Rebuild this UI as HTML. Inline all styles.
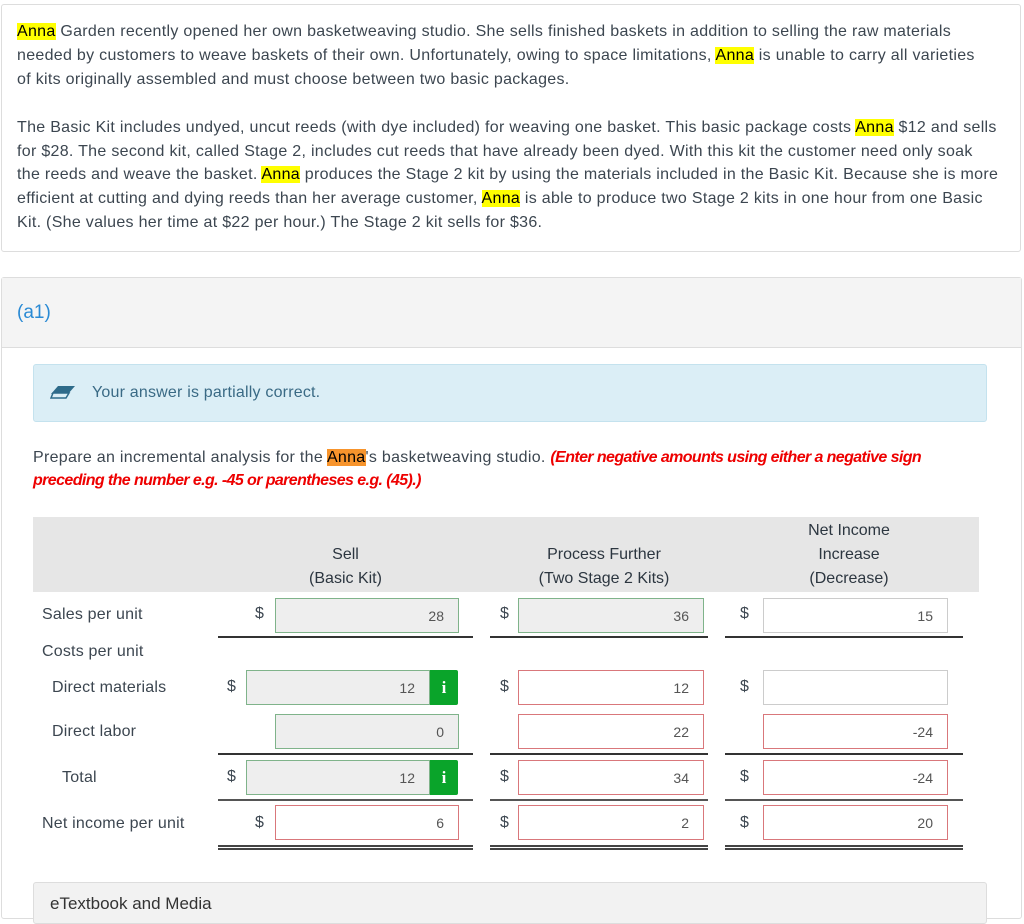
<!DOCTYPE html>
<html><head><meta charset="utf-8"><style>
body{margin:0;width:1024px;height:913px;overflow:hidden;background:#fff;font-family:"Liberation Sans",sans-serif;color:#3c4650;position:relative}
.a{position:absolute;white-space:nowrap}
.box1{position:absolute;left:1px;top:4px;width:1018px;height:246px;border:1px solid #ddd;border-radius:3px}
.p{position:absolute;left:17px;font-size:16px;white-space:nowrap;letter-spacing:0.3px}
.hl{background:#ffff00;color:#000}
.hlo{background:#f7942c;color:#000}
.card{position:absolute;left:1px;top:277px;width:1019px;height:640px;border:1px solid #ddd;border-radius:3px}
.chead{position:absolute;left:0;top:0;width:1019px;height:69px;background:#f4f4f4;border-bottom:1px solid #ddd}
.inp{position:absolute;height:35px;border:1px solid #ccc;font-size:14px;color:#555;text-align:right;line-height:35px;padding-right:14px;box-sizing:border-box}
.g{border-color:#7fb38a;background:#eee}
.r{border-color:#d9777b;background:#fff}
.w{border-color:#ccc;background:#fff}
.ib{position:absolute;width:28px;height:35px;background:#0aa42a;color:#fff;font-weight:bold;font-family:"Liberation Serif",serif;font-size:17px;text-align:center;line-height:35px;border-radius:0 2px 2px 0}
.d{position:absolute;font-size:16px;color:#3c4650}
.ln{position:absolute;height:2px;background:#333}
.dl{position:absolute;border-top:2px solid #444;border-bottom:2px solid #444;box-sizing:border-box;height:5px}
.lab{position:absolute;font-size:16px;color:#3c4650;letter-spacing:0.2px}
.hd{position:absolute;font-size:16px;text-align:center;color:#2c3640;line-height:24px}
</style></head><body>
<div class="box1"></div>
<div class="p" style="top:23px"><span class="hl">Anna</span> Garden recently opened her own basketweaving studio. She sells finished baskets in addition to selling the raw materials</div>
<div class="p" style="top:47px">needed by customers to weave baskets of their own. Unfortunately, owing to space limitations, <span class="hl">Anna</span> is unable to carry all varieties</div>
<div class="p" style="top:71px">of kits originally assembled and must choose between two basic packages.</div>
<div class="p" style="top:119px">The Basic Kit includes undyed, uncut reeds (with dye included) for weaving one basket. This basic package costs <span class="hl">Anna</span> $12 and sells</div>
<div class="p" style="top:143px">for $28. The second kit, called Stage 2, includes cut reeds that have already been dyed. With this kit the customer need only soak</div>
<div class="p" style="top:166px">the reeds and weave the basket. <span class="hl">Anna</span> produces the Stage 2 kit by using the materials included in the Basic Kit. Because she is more</div>
<div class="p" style="top:190px">efficient at cutting and dying reeds than her average customer, <span class="hl">Anna</span> is able to produce two Stage 2 kits in one hour from one Basic</div>
<div class="p" style="top:214px">Kit. (She values her time at $22 per hour.) The Stage 2 kit sells for $36.</div>

<div class="card"><div class="chead"></div></div>
<div class="a" style="left:17px;top:302px;font-size:19px;color:#2a8ad4">(a1)</div>
<div class="a" style="left:33px;top:364px;width:952px;height:56px;background:#dbeef6;border:1px solid #c4e2ee;border-radius:3px"></div>
<svg class="a" style="left:50px;top:385px" width="26" height="14" viewBox="0 0 26 14"><path d="M8 1H25L18 9H1Z" fill="#2e6b8a"/><path d="M3 8H19L16 13H1Z" fill="#dbeef6" stroke="#2e6b8a" stroke-width="1.5"/></svg>
<div class="a" style="left:92px;top:384px;font-size:16px;color:#3a6a85;letter-spacing:0.2px">Your answer is partially correct.</div>
<div class="a" style="left:33px;top:449px;font-size:16px;letter-spacing:0.3px">Prepare an incremental analysis for the <span class="hlo">Anna</span>'s basketweaving studio. <b style="color:#e00;font-style:italic;letter-spacing:-0.6px">(Enter negative amounts using either a negative sign</b></div>
<div class="a" style="left:33px;top:472px;font-size:16px;color:#e00;font-weight:bold;font-style:italic;letter-spacing:-0.6px">preceding the number e.g. -45 or parentheses e.g. (45).)</div>

<div class="a" style="left:33px;top:517px;width:946px;height:75px;background:#e6e6e6"></div>
<div class="hd" style="left:218px;top:543px;width:255px">Sell<br>(Basic Kit)</div>
<div class="hd" style="left:490px;top:543px;width:228px">Process Further<br>(Two Stage 2 Kits)</div>
<div class="hd" style="left:725px;top:519px;width:248px">Net Income<br>Increase<br>(Decrease)</div>

<div class="lab" style="left:42px;top:606px">Sales per unit</div>
<div class="lab" style="left:42px;top:643px">Costs per unit</div>
<div class="lab" style="left:52px;top:679px">Direct materials</div>
<div class="lab" style="left:52px;top:723px">Direct labor</div>
<div class="lab" style="left:62px;top:769px">Total</div>
<div class="lab" style="left:42px;top:815px">Net income per unit</div>

<div class="d" style="left:255px;top:605px">$</div><div class="inp g" style="left:275px;top:598px;width:184px">28</div>
<div class="d" style="left:500px;top:605px">$</div><div class="inp g" style="left:518px;top:598px;width:186px">36</div>
<div class="d" style="left:740px;top:605px">$</div><div class="inp w" style="left:763px;top:598px;width:185px">15</div>
<div class="ln" style="left:218px;top:636px;width:255px"></div>
<div class="ln" style="left:490px;top:636px;width:218px"></div>
<div class="ln" style="left:725px;top:636px;width:238px"></div>

<div class="d" style="left:227px;top:678px">$</div><div class="inp g" style="left:246px;top:670px;width:184px">12</div><div class="ib" style="left:430px;top:670px">i</div>
<div class="d" style="left:500px;top:678px">$</div><div class="inp r" style="left:518px;top:670px;width:186px">12</div>
<div class="d" style="left:740px;top:678px">$</div><div class="inp w" style="left:763px;top:670px;width:185px"></div>

<div class="inp g" style="left:275px;top:714px;width:184px">0</div>
<div class="inp r" style="left:518px;top:714px;width:186px">22</div>
<div class="inp r" style="left:763px;top:714px;width:185px">-24</div>
<div class="ln" style="left:218px;top:753px;width:255px"></div>
<div class="ln" style="left:490px;top:753px;width:218px"></div>
<div class="ln" style="left:725px;top:753px;width:238px"></div>

<div class="d" style="left:227px;top:768px">$</div><div class="inp g" style="left:246px;top:760px;width:184px">12</div><div class="ib" style="left:430px;top:760px">i</div>
<div class="d" style="left:500px;top:768px">$</div><div class="inp r" style="left:518px;top:760px;width:186px">34</div>
<div class="d" style="left:740px;top:768px">$</div><div class="inp r" style="left:763px;top:760px;width:185px">-24</div>
<div class="ln" style="left:218px;top:799px;width:255px;background:#555"></div>
<div class="ln" style="left:490px;top:799px;width:218px;background:#555"></div>
<div class="ln" style="left:725px;top:799px;width:238px;background:#555"></div>

<div class="d" style="left:255px;top:814px">$</div><div class="inp r" style="left:275px;top:805px;width:184px">6</div>
<div class="d" style="left:500px;top:814px">$</div><div class="inp r" style="left:518px;top:805px;width:186px">2</div>
<div class="d" style="left:740px;top:814px">$</div><div class="inp r" style="left:763px;top:805px;width:185px">20</div>
<div class="dl" style="left:218px;top:845px;width:255px"></div>
<div class="dl" style="left:490px;top:845px;width:218px"></div>
<div class="dl" style="left:725px;top:845px;width:238px"></div>

<div class="a" style="left:33px;top:882px;width:952px;height:40px;background:#f2f2f2;border:1px solid #ddd;border-radius:3px"></div>
<div class="a" style="left:50px;top:894px;font-size:17px;color:#333">eTextbook and Media</div>
</body></html>
